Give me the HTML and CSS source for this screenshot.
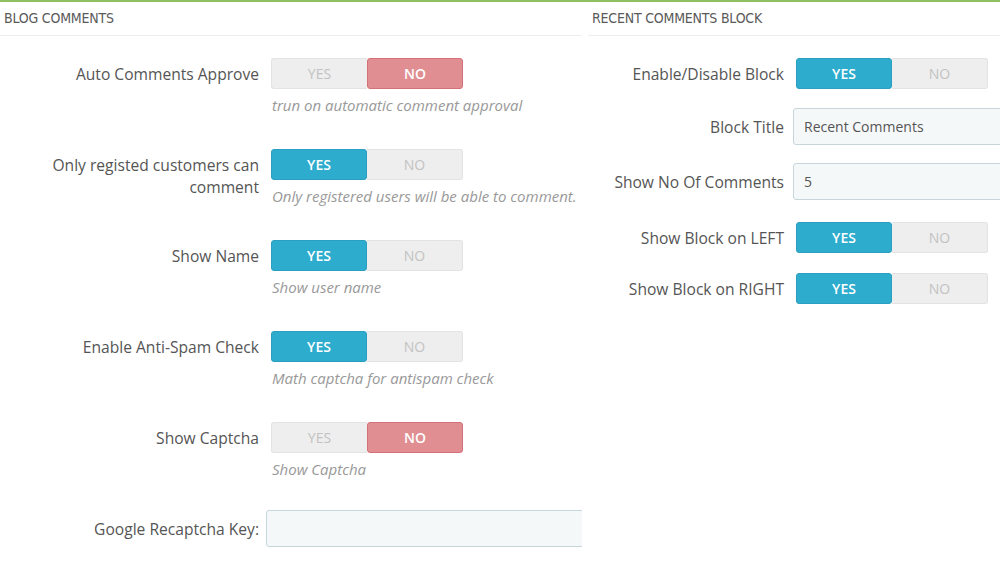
FILE: index.html
```html
<!DOCTYPE html>
<html lang="en">
<head>
<meta charset="utf-8">
<title>Blog comments settings</title>
<link rel="stylesheet" href="styles.css">
</head>
<body>
<div class="page">
  <section class="panel panel-left">
    <h3 class="panel-head">Blog Comments</h3>
    <div class="panel-body">
      <div class="row">
        <label class="label">Auto Comments Approve</label>
        <div class="control">
          <div class="switch"><span class="opt">YES</span><span class="opt on-no">NO</span></div>
          <p class="help">trun on automatic comment approval</p>
        </div>
      </div>
      <div class="row">
        <label class="label">Only registed customers can comment</label>
        <div class="control">
          <div class="switch"><span class="opt on-yes">YES</span><span class="opt">NO</span></div>
          <p class="help">Only registered users will be able to comment.</p>
        </div>
      </div>
      <div class="row">
        <label class="label">Show Name</label>
        <div class="control">
          <div class="switch"><span class="opt on-yes">YES</span><span class="opt">NO</span></div>
          <p class="help">Show user name</p>
        </div>
      </div>
      <div class="row">
        <label class="label">Enable Anti-Spam Check</label>
        <div class="control">
          <div class="switch"><span class="opt on-yes">YES</span><span class="opt">NO</span></div>
          <p class="help">Math captcha for antispam check</p>
        </div>
      </div>
      <div class="row">
        <label class="label">Show Captcha</label>
        <div class="control">
          <div class="switch"><span class="opt">YES</span><span class="opt on-no">NO</span></div>
          <p class="help">Show Captcha</p>
        </div>
      </div>
      <div class="row row-input">
        <label class="label">Google Recaptcha Key:</label>
        <div class="control control-input">
          <input class="field" type="text" value="">
        </div>
      </div>
    </div>
  </section>

  <section class="panel panel-right">
    <h3 class="panel-head">Recent Comments Block</h3>
    <div class="panel-body">
      <div class="row-r row-r-first">
        <label class="label-r">Enable/Disable Block</label>
        <div class="switch"><span class="opt on-yes">YES</span><span class="opt">NO</span></div>
      </div>
      <div class="row-r">
        <label class="label-r">Block Title</label>
        <input class="field field-r" type="text" value="Recent Comments">
      </div>
      <div class="row-r row-r-tight">
        <label class="label-r">Show No Of Comments</label>
        <input class="field field-r" type="text" value="5">
      </div>
      <div class="row-r">
        <label class="label-r">Show Block on LEFT</label>
        <div class="switch"><span class="opt on-yes">YES</span><span class="opt">NO</span></div>
      </div>
      <div class="row-r">
        <label class="label-r">Show Block on RIGHT</label>
        <div class="switch"><span class="opt on-yes">YES</span><span class="opt">NO</span></div>
      </div>
    </div>
  </section>
</div>
</body>
</html>
```

FILE: styles.css
```css
html, body {
  margin: 0;
  padding: 0;
  background: #fff;
  overflow: hidden;
}

body {
  font-family: "Open Sans", "Liberation Sans", sans-serif;
  color: #555;
  width: 1000px;
  height: 574px;
}

.page {
  display: flex;
  gap: 6px;
  border-top: 2px solid #8fc060;
  width: 1200px;
}

.panel {
  flex-shrink: 0;
  overflow: hidden;
}

.panel-left {
  width: 582px;
}

.panel-right {
  width: 600px;
}

.panel-head {
  margin: 0;
  height: 33px;
  border-bottom: 1px solid #eee;
  padding-left: 4px;
  font-family: "DejaVu Sans Condensed", "DejaVu Sans", sans-serif;
  font-stretch: condensed;
  font-weight: normal;
  font-size: 14px;
  line-height: 32px;
  text-transform: uppercase;
  color: #5a5a5a;
  letter-spacing: -0.2px;
}

.panel-body {
  padding-top: 22px;
}

/* left column form rows */
.row {
  display: flex;
  align-items: flex-start;
  margin-bottom: 33px;
}

.label {
  box-sizing: border-box;
  width: 227px;
  margin-left: 44px;
  padding: 5px 12px 0 0;
  text-align: right;
  font-size: 15.6px;
  line-height: 22px;
  color: #555;
  flex-shrink: 0;
}

.control {
  flex: 1;
}

.help {
  margin: 6px 0 0 1px;
  font-size: 15px;
  line-height: 21px;
  font-style: italic;
  color: #999;
  white-space: nowrap;
}

.row-input {
  align-items: center;
  margin-top: -3px;
}

.row-input .label {
  padding-top: 0;
}

.control-input {
  margin-left: -5px;
}

.field {
  box-sizing: border-box;
  display: block;
  height: 37px;
  width: 420px;
  padding: 0 10px;
  background: #f5f8f9;
  border: 1px solid #c7d6db;
  border-radius: 3px;
  font-family: "Open Sans", "Liberation Sans", sans-serif;
  font-size: 14px;
  color: #555;
  outline: none;
}

/* yes / no switch */
.switch {
  display: flex;
  width: 192px;
  height: 31px;
  flex-shrink: 0;
}

.opt {
  box-sizing: border-box;
  width: 96px;
  display: flex;
  align-items: center;
  justify-content: center;
  font-size: 14px;
  color: #c2c2c2;
  background: #eee;
  border: 1px solid #e3e3e3;
}

.opt:first-child {
  border-radius: 3px 0 0 3px;
  border-right: 0;
}

.opt:last-child {
  border-radius: 0 3px 3px 0;
  border-left: 0;
}

.opt.on-yes {
  background: #2eacce;
  border: 1px solid #2a9fc0;
  border-radius: 3px;
  color: #fff;
  font-weight: 600;
}

.opt.on-no {
  background: #e18e93;
  border: 1px solid #d47178;
  border-radius: 3px;
  color: #fff;
  font-weight: 600;
}

/* right column form rows */
.row-r {
  display: flex;
  align-items: center;
  margin-bottom: 20px;
}

.row-r-first {
  margin-bottom: 19px;
}

.row-r-tight {
  margin-top: -2px;
  margin-bottom: 22px;
}

.label-r {
  box-sizing: border-box;
  width: 208px;
  padding-right: 12px;
  text-align: right;
  font-size: 15.6px;
  line-height: 22px;
  color: #555;
  flex-shrink: 0;
}

.field-r {
  margin-left: -3px;
  width: 300px;
}
```
